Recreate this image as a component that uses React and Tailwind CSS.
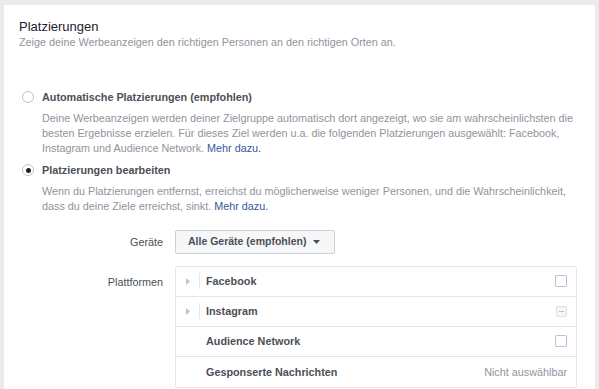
import React from 'react';

const font = { fontFamily: '"Liberation Sans", Arial, Helvetica, sans-serif' };

const Radio = ({ checked }) => (
  <span className="w-[12px] h-[12px] rounded-full border border-[#bec3c9] bg-white flex items-center justify-center shrink-0">
    {checked && <span className="w-[5px] h-[5px] rounded-full bg-[#1d2129]" />}
  </span>
);

const Checkbox = ({ disabled }) =>
  disabled ? (
    <span className="w-[11px] h-[11px] rounded-[2px] border border-[#dddfe2] bg-[#f5f6f7] flex items-center justify-center">
      <span className="w-[5px] h-px bg-[#bec3c9]" />
    </span>
  ) : (
    <span className="w-[12px] h-[12px] rounded-[2px] border border-[#bec3c9] border-r-[#a9bde6] bg-white" />
  );

const Caret = () => (
  <span className="w-[23px] flex items-center justify-center self-stretch">
    <svg width="4" height="7" viewBox="0 0 4 7">
      <path d="M0 0 L4 3.5 L0 7 Z" fill="#bec3c9" />
    </svg>
  </span>
);

const PlatformRow = ({ name, expandable, right, last }) => (
  <div className={`h-[30px] flex items-center pr-[9px] ${last ? '' : 'border-b border-[#e5e6e9]'}`}>
    {expandable ? (
      <>
        <Caret />
        <span className="w-px h-[16px] bg-[#e5e6e9]" />
        <span className="w-[6px]" />
      </>
    ) : (
      <span className="w-[30px]" />
    )}
    <span className="flex-1 text-[10.8px] font-bold text-[#4b4f56]">{name}</span>
    {right}
  </div>
);

export default function App() {
  return (
    <div style={font} className="min-h-screen bg-[#e9ebee] pt-[5px] px-[4px] overflow-hidden">
      <div className="bg-white pl-[15px] pr-[18px] pt-[15px] pb-[30px]">
        <h2 className="text-[13px] leading-[14px] text-[#1d2129]">Platzierungen</h2>
        <p className="mt-px text-[10.8px] leading-[15px] text-[#90949c]">
          Zeige deine Werbeanzeigen den richtigen Personen an den richtigen Orten an.
        </p>

        <div className="mt-[39px] pl-[3px]">
          <label className="flex items-center gap-[8px] h-[16px]">
            <Radio />
            <span className="text-[10.8px] font-bold text-[#4b4f56]">Automatische Platzierungen (empfohlen)</span>
          </label>
          <p className="mt-[6px] pl-[20px] text-[10.8px] leading-[14.8px] text-[#90949c]">
            Deine Werbeanzeigen werden deiner Zielgruppe automatisch dort angezeigt, wo sie am wahrscheinlichsten die
            besten Ergebnisse erzielen. Für dieses Ziel werden u.a. die folgenden Platzierungen ausgewählt: Facebook,
            Instagram und Audience Network. <a className="text-[#365899]">Mehr dazu.</a>
          </p>

          <label className="mt-[7px] flex items-center gap-[8px] h-[16px]">
            <Radio checked />
            <span className="text-[10.8px] font-bold text-[#4b4f56]">Platzierungen bearbeiten</span>
          </label>
          <p className="mt-[6px] pl-[20px] text-[10.8px] leading-[14.8px] text-[#90949c]">
            Wenn du Platzierungen entfernst, erreichst du möglicherweise weniger Personen, und die Wahrscheinlichkeit,
            dass du deine Ziele erreichst, sinkt. <a className="text-[#365899]">Mehr dazu.</a>
          </p>
        </div>

        <div className="mt-[16px] flex items-center">
          <span className="w-[144px] text-right text-[10.8px] text-[#4b4f56]">Geräte</span>
          <button className="ml-[12px] h-[24px] pl-[12px] pr-[14px] flex items-center gap-[7px] rounded-[2px] border border-[#ced0d4] bg-[#f6f7f9] text-[10.5px] font-bold text-[#4b4f56] whitespace-nowrap">
            <span>Alle Geräte (empfohlen)</span>
            <svg width="7" height="4" viewBox="0 0 7 4">
              <path d="M0 0 L7 0 L3.5 4 Z" fill="#4b4f56" />
            </svg>
          </button>
        </div>

        <div className="mt-[12px] flex items-start">
          <span className="w-[144px] pt-[8px] text-right text-[10.8px] text-[#4b4f56]">Plattformen</span>
          <div className="ml-[12px] flex-1 border border-[#e5e6e9] rounded-[2px]">
            <PlatformRow name="Facebook" expandable right={<Checkbox />} />
            <PlatformRow name="Instagram" expandable right={<Checkbox disabled />} />
            <PlatformRow name="Audience Network" right={<Checkbox />} />
            <PlatformRow
              name="Gesponserte Nachrichten"
              last
              right={<span className="text-[10.8px] text-[#90949c]">Nicht auswählbar</span>}
            />
          </div>
        </div>
      </div>
    </div>
  );
}
